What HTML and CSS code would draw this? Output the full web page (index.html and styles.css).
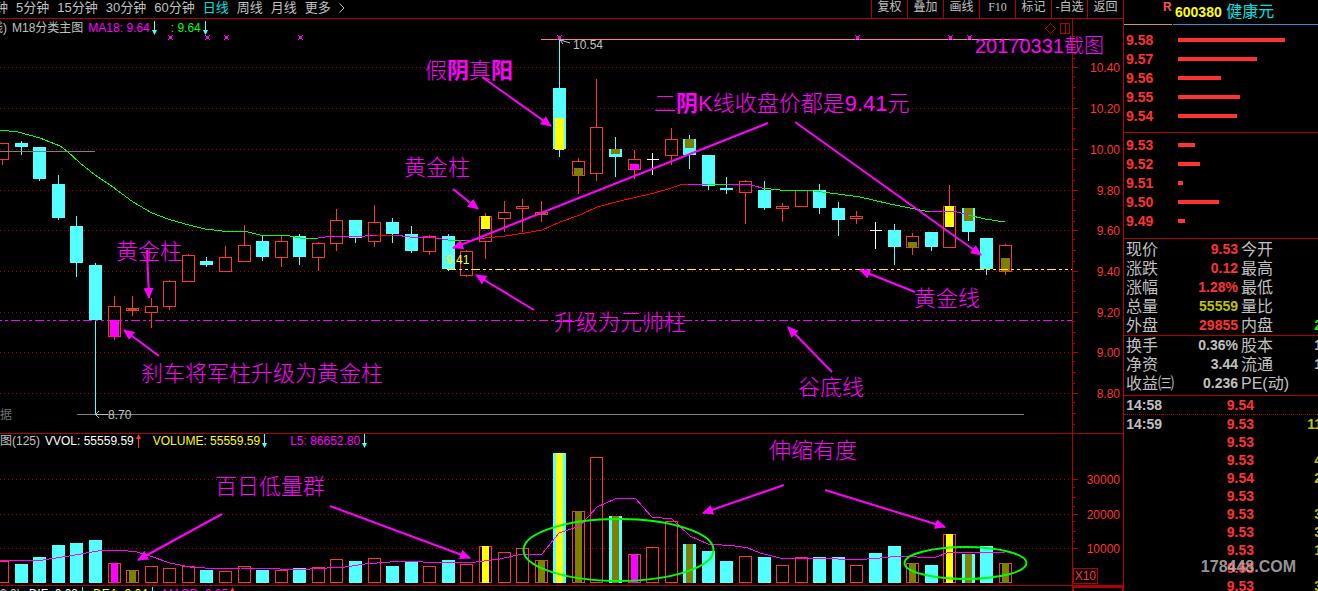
FILE: index.html
```html
<!DOCTYPE html>
<html lang="zh-CN">
<head>
<meta charset="utf-8">
<title>600380 健康元</title>
<link rel="stylesheet" href="styles.css">
</head>
<body>
<div class="app">
  <main class="main">
    <nav class="toolbar">
      <div class="periods">
        <button class="period first">钟</button>
        <button class="period">5分钟</button>
        <button class="period">15分钟</button>
        <button class="period">30分钟</button>
        <button class="period">60分钟</button>
        <button class="period active">日线</button>
        <button class="period">周线</button>
        <button class="period">月线</button>
        <button class="period">更多</button>
        <svg class="more" viewBox="0 0 6 10"><path d="M.5 .5 5 5 .5 9.500"/></svg>
      </div>
      <div class="tools">
        <button class="tool">复权</button>
        <button class="tool">叠加</button>
        <button class="tool">画线</button>
        <button class="tool f10">F10</button>
        <button class="tool">标记</button>
        <button class="tool">-自选</button>
        <button class="tool">返回</button>
      </div>
    </nav>

    <section class="panel">
      <svg class="chart" viewBox="0 19 1123 414">
        <defs>
          <marker id="head" markerUnits="userSpaceOnUse" markerWidth="12" markerHeight="10" refX="10" refY="5" orient="auto"><path d="M0 0 11 5 0 10z" fill="#f0f"/></marker>
        </defs>
        <path class="grid" d="M0 67.500H1072M0 108.500H1072M0 149.500H1072M0 190.500H1072M0 230.500H1072M0 271.500H1072M0 312.500H1072M0 352.500H1072M0 393.500H1072"/>
        <g id="priceAxis" class="axis"><path d="M1072.500 19V433"/></g>
        <g class="axis-text">
          <text x="1120" y="72">10.40</text><text x="1120" y="113">10.20</text><text x="1120" y="154">10.00</text>
          <text x="1120" y="195">9.80</text><text x="1120" y="235">9.60</text><text x="1120" y="276">9.40</text>
          <text x="1120" y="317">9.20</text><text x="1120" y="357">9.00</text><text x="1120" y="398">8.80</text>
        </g>
        <path class="axis" d="M1045.500 28.500l5-5 5 5-5 5zM1060.500 23.500h9v10h-9zM1065.500 23.500v10"/>
        <g id="candles"></g>
        <path class="level" d="M0 151.500H95M77 414.500H1024"/>
        <path class="high" d="M541 39.500H1024"/>
        <path class="dash magenta" stroke-dashoffset="13" d="M0 320.500H1072"/>
        <path class="dash yellow" d="M447 269.500H1072"/>
        <g class="ma">
          <path stroke="#0f0" d="M0 130 18 132 40 138 60 146 67 151 80 163 95 175 113 187 133 202 152 213 168 219 185 224 205 229 222 231 248 232 260 235 285 235 300 238 318 238M448 240 465 241M708 184H727M762 188 780 190 806 190 830 193 860 197 890 204 920 210 930 212M968 215 985 219 1005 222"/>
          <path stroke="#f0f" d="M318 238 333 236 365 236 376 235M395 235 410 237 430 237 448 240M465 241 485 238M688 184H708M727 184H748L762 188M930 212 943 211 957 212 968 215"/>
          <path stroke="#f00" d="M376 235H395M485 238 505 236 525 233 542 230 560 222 580 215 597 207 620 201 650 194 665 190 680 185 688 184"/>
        </g>
        <g id="crosses" class="cross"></g>
        <path class="pointer" d="M108 414.500H95.500L99 411M95.500 414.500 99 418M570 43 560 40 563 44M560 40H564"/>
        <text class="mark" x="108" y="419">8.70</text>
        <text class="mark" x="573" y="49">10.54</text>
        <text class="mark dim" x="0" y="419">据</text>
        <text class="mark tag" x="446" y="264">9.41</text>
        <g class="arrow">
          <path d="M147 250 149 298"/><path d="M159 356 124 330"/><path d="M482 77 551 126"/>
          <path d="M453 189 478 209"/><path d="M768 123 453 248"/><path d="M795 122 981 255"/>
          <path d="M534 310 476 275"/><path d="M915 292 860 270"/><path d="M832 372 788 327"/>
        </g>
        <g class="note">
          <text x="116" y="259">黄金柱</text>
          <text x="141" y="381">刹车将军柱升级为黄金柱</text>
          <text x="425" y="78">假<tspan class="b">阴</tspan>真<tspan class="b">阳</tspan></text>
          <text x="404" y="175">黄金柱</text>
          <text x="654" y="111">二<tspan class="b">阴</tspan>K线收盘价都是9.41元</text>
          <text x="554" y="330">升级为元帅柱</text>
          <text x="914" y="306">黄金线</text>
          <text x="798" y="395">谷底线</text>
          <text class="date" x="975" y="53">20170331截图</text>
        </g>
      </svg>
      <header class="legend">
        <span class="gray lead">线)</span><span class="gray g5">M18分类主图</span>
        <span class="magenta-t g5">MA18: 9.64</span><svg class="down" viewBox="0 0 5 14"><path d="M2.500 0V11"/><path class="tip" d="M0 9h5L2.500 14z"/></svg>
        <span class="green-t g14">: 9.64</span><svg class="down" viewBox="0 0 5 14"><path d="M2.500 0V11"/><path class="tip" d="M0 9h5L2.500 14z"/></svg>
      </header>
    </section>

    <section class="panel">
      <svg class="chart" viewBox="0 433 1123 152">
        <path class="grid" d="M0 479.500H1072M0 514.500H1072M0 548.500H1072"/>
        <path class="axis" d="M0 433.500H1123M1072.500 433V585M1073 479.500h5M1073 514.500h5M1073 548.500h5M1073 487.500h2M1073 497.500h3M1073 506.500h2M1073 521.500h2M1073 531.500h3M1073 541.500h2M1073.500 568.500h24v15h-24z"/>
        <g class="axis-text">
          <text x="1120" y="484">30000</text><text x="1120" y="519">20000</text><text x="1120" y="553">10000</text>
          <text x="1096" y="580">X10</text>
        </g>
        <g id="volumes"></g>
        <path class="ma" stroke="#f0f" d="M0 560 43 560 75 555 98 551 118 550 137 552 150 556 170 563 190 567 205 568 240 568 280 569 310 569 345 567 365 564 390 562 410 561 435 563 450 562 468 563 500 559 522 554 542 554 559 533 580 526 597 507 615 499 635 498 652 517 672 519 690 536 708 544 735 546 748 548 760 553 780 558 800 559 820 558 855 560 880 558 900 556 933 558 950 552 995 552 1005 553"/>
        <g class="ring"><ellipse cx="618.500" cy="550" rx="95" ry="31"/><ellipse cx="965.500" cy="563" rx="61" ry="16"/></g>
        <g class="arrow">
          <path d="M222 514 138 560"/><path d="M330 506 470 558"/><path d="M784 485 703 513"/><path d="M825 490 945 527"/>
        </g>
        <g class="note">
          <text x="215" y="494">百日低量群</text>
          <text x="769" y="458">伸缩有度</text>
        </g>
      </svg>
      <header class="legend vol">
        <span class="gray">图(125)</span>
        <span class="white-t g5">VVOL: 55559.59</span><svg class="up" viewBox="0 0 5 14"><path d="M2.500 3V14"/><path class="tip" d="M0 5h5L2.500 0z"/></svg>
        <span class="yellow-t g12">VOLUME: 55559.59</span><svg class="down" viewBox="0 0 5 14"><path d="M2.500 0V11"/><path class="tip" d="M0 9h5L2.500 14z"/></svg>
        <span class="magenta-t g23">L5: 86652.80</span><svg class="down" viewBox="0 0 5 14"><path d="M2.500 0V11"/><path class="tip" d="M0 9h5L2.500 14z"/></svg>
      </header>
    </section>

    <section class="macd">
      <header class="legend vol">
        <span class="gray">9,9)</span>
        <span class="white-t g8">DIF: 0.08</span><svg class="down" viewBox="0 0 5 14"><path d="M2.500 0V11"/></svg>
        <span class="yellow-t g8">DEA: 0.04</span><svg class="down" viewBox="0 0 5 14"><path d="M2.500 0V11"/></svg>
        <span class="magenta-t g8">MACD: 0.05</span><svg class="up" viewBox="0 0 5 14"><path d="M2.500 3V14"/><path class="tip" d="M0 5h5L2.500 0z"/></svg>
      </header>
      <div class="macd-axis"></div>
    </section>
  </main>

  <aside class="side">
    <header class="stock"><span class="flag">R</span><span class="name"><b>600380</b> 健康元</span></header>
    <div class="book sell">
      <div class="quote"><b>9.58</b><i style="width:107px"></i></div>
      <div class="quote"><b>9.57</b><i style="width:79px"></i></div>
      <div class="quote"><b>9.56</b><i style="width:43px"></i></div>
      <div class="quote"><b>9.55</b><i style="width:62px"></i></div>
      <div class="quote"><b>9.54</b><i style="width:59px"></i></div>
    </div>
    <div class="book buy">
      <div class="quote"><b>9.53</b><i style="width:17px"></i></div>
      <div class="quote"><b>9.52</b><i style="width:22px"></i></div>
      <div class="quote"><b>9.51</b><i style="width:5px"></i></div>
      <div class="quote"><b>9.50</b><i style="width:41px"></i></div>
      <div class="quote"><b>9.49</b><i style="width:7px"></i></div>
    </div>
    <div class="block price">
      <table class="info">
        <tr><th>现价</th><td class="red-t">9.53</td><th>今开</th><td></td></tr>
        <tr><th>涨跌</th><td class="red-t">0.12</td><th>最高</th><td></td></tr>
        <tr><th>涨幅</th><td class="red-t">1.28%</td><th>最低</th><td></td></tr>
        <tr><th>总量</th><td class="olive-t">55559</td><th>量比</th><td></td></tr>
        <tr><th>外盘</th><td class="red-t">29855</td><th>内盘</th><td class="green-t">2</td></tr>
      </table>
    </div>
    <div class="block finance">
      <table class="info">
        <tr><th>换手</th><td>0.36%</td><th>股本</th><td>1</td></tr>
        <tr><th>净资</th><td>3.44</th><th>流通</th><td>1</td></tr>
        <tr><th>收益㈢</th><td>0.236</td><th>PE(动)</th><td></td></tr>
      </table>
    </div>
    <table class="ticks">
      <tr class="split"><th>14:58</th><td>9.54</td><td></td></tr>
      <tr><th>14:59</th><td>9.53</td><td>11</td></tr>
      <tr><th></th><td>9.53</td><td></td></tr>
      <tr><th></th><td>9.53</td><td>4</td></tr>
      <tr><th></th><td>9.54</td><td>2</td></tr>
      <tr><th></th><td>9.53</td><td></td></tr>
      <tr><th></th><td>9.53</td><td>3</td></tr>
      <tr><th></th><td>9.53</td><td>3</td></tr>
      <tr><th></th><td>9.53</td><td>1</td></tr>
      <tr><th></th><td>9.53</td><td></td></tr>
      <tr><th></th><td>9.53</td><td>3</td></tr>
    </table>
    <div class="watermark">178448.COM</div>
  </aside>
</div>
<script src="chart.js"></script>
</body>
</html>
```
FILE: styles.css
```css
* { box-sizing: border-box; }
html, body { height: 100%; }
body {
  margin: 0;
  background: #000;
  color: #c0c0c0;
  font: 12px/14px "Liberation Sans", "Noto Sans CJK SC", sans-serif;
  overflow: hidden;
}
.app {
  display: grid;
  grid-template-columns: minmax(0, 1fr) 195px;
  height: 100vh;
  overflow: hidden;
}
.main { min-width: 0; overflow: hidden; }

/* toolbar */
.toolbar {
  display: flex;
  justify-content: space-between;
  height: 19px;
  border-bottom: 1px solid #b00000;
  overflow: hidden;
}
.periods { display: flex; gap: 8px; align-items: flex-start; }
.period, .tool {
  border: 0;
  padding: 0;
  background: none;
  color: #c0c0c0;
  font: 13px/15px "Liberation Sans", "Noto Sans CJK SC", sans-serif;
  white-space: nowrap;
}
.first { margin-left: -5px; }
.active { color: #00e0e0; }
.more { width: 6px; height: 10px; margin-top: 3px; fill: none; stroke: #c0c0c0; }
.tools { display: flex; }
.tool { width: 36px; border-left: 1px solid #b00000; padding-bottom: 3px; font-size: 12px; }
.f10 { font-family: "Liberation Serif", serif; }

/* chart panels */
.panel { display: grid; }
.panel > * { grid-area: 1 / 1; }
.chart { display: block; width: 100%; height: auto; }
.grid { stroke: #b00000; stroke-dasharray: 1 3; shape-rendering: crispEdges; }
.axis { fill: none; stroke: #b00000; shape-rendering: crispEdges; }
.axis-text { fill: #ff3232; font-size: 12px; text-anchor: end; }
.level { stroke: #808080; shape-rendering: crispEdges; }
.high { stroke: #ff8080; shape-rendering: crispEdges; }
.dash { stroke-dasharray: 9 3 3 3 3 3; shape-rendering: crispEdges; }
.magenta { stroke: #f0f; }
.yellow { stroke: #ff0; }
.ma { fill: none; shape-rendering: crispEdges; }
.cross { fill: #f0f; shape-rendering: crispEdges; }
.pointer { fill: none; stroke: #c0c0c0; }
.mark { fill: #c0c0c0; font-size: 12px; }
.dim { fill: #707070; }
.tag { fill: #ff0; }
.arrow path { stroke: #f0f; stroke-width: 2; marker-end: url(#head); }
.ring { fill: none; stroke: #0f0; stroke-width: 2; }
.note { fill: #f0f; font-size: 22px; font-weight: 300; }
.note .date { font-size: 20px; }
.b { font-weight: 700; }
.red { fill: none; stroke: #ff3232; shape-rendering: crispEdges; }
.cyan { fill: #54ffff; stroke: none; shape-rendering: crispEdges; }
.wick-cyan { stroke: #54ffff; shape-rendering: crispEdges; }
.doji { stroke: #fff; shape-rendering: crispEdges; }

/* legends */
.legend {
  display: flex;
  align-self: start;
  justify-self: start;
  align-items: center;
  padding-top: 2px;
  white-space: nowrap;
}
.legend.vol { padding-top: 1px; }
.legend svg { width: 5px; height: 14px; margin-left: 2px; }
.lead { margin-left: -9px; }
.g5 { margin-left: 5px; }
.g8 { margin-left: 8px; }
.g12 { margin-left: 12px; }
.g14 { margin-left: 14px; }
.g23 { margin-left: 23px; }
.down { stroke: #54ffff; fill: #54ffff; }
.up { stroke: #ff3232; fill: #ff3232; }
.tip { stroke: none; }
.gray { color: #c0c0c0; }
.white-t { color: #fff; }
.yellow-t { color: #ff0; }
.magenta-t { color: #f0f; }
.green-t, .info .green-t { color: #0f0; }
.red-t, .info .red-t { color: #ff3232; }
.info .olive-t { color: #c0c000; }

.macd {
  display: flex;
  justify-content: space-between;
  border-top: 1px solid #b00000;
}
.macd-axis { width: 51px; border: 2px solid #b00000; border-right-width: 1px; }

/* quote panel */
.side {
  display: flex;
  flex-direction: column;
  position: relative;
  border-left: 1px solid #b00000;
  overflow: hidden;
}
.stock {
  display: grid;
  grid-template-columns: 48px 1fr;
  column-gap: 1px;
  flex: none;
  height: 24px;
}
.flag {
  padding-left: 39px;
  border-bottom: 1px solid #d0a030;
  color: #ff5050;
  font-size: 12px;
  font-weight: 700;
}
.name {
  padding-left: 2px;
  border-bottom: 1px solid #3c8cd0;
  color: #00e0e0;
  font-size: 16px;
  line-height: 23px;
  white-space: nowrap;
}
.name b { color: #ff0; font-size: 14px; }
.book { flex: none; border-bottom: 1px solid #b00000; }
.sell { padding: 6px 0 7px; }
.buy { padding: 2px 0 8px; }
.quote {
  display: grid;
  grid-template-columns: 52px 1fr;
  align-items: center;
  height: 19px;
  padding-left: 2px;
}
.quote b { color: #ff3232; font-size: 14px; }
.quote i { height: 4px; background: #ff3232; }
.block { flex: none; border-bottom: 1px solid #b00000; }
.price { padding-top: 1px; }
.finance { padding-bottom: 2px; }
table { flex: none; width: 198px; table-layout: fixed; border-collapse: separate; border-spacing: 0; }
th, td { padding: 0; white-space: nowrap; }
.info tr { height: 19px; }
.info th {
  width: 50px;
  padding-left: 2px;
  font-size: 16px;
  font-weight: 400;
  line-height: 19px;
  text-align: left;
}
.info td { width: 64px; font-size: 14px; font-weight: 700; line-height: 19px; text-align: right; }
.info th + td + th { padding-left: 3px; }
.info td:last-child { width: 34px; }
.ticks th, .ticks td { height: 18px; font-size: 14px; font-weight: 700; line-height: 17px; text-align: right; }
.ticks th { width: 38px; }
.ticks td { color: #ff3232; width: 92px; }
.ticks td:last-child { width: 68px; color: #c0c000; }
.ticks .split > * { height: 19px; border-bottom: 1px dotted #b00000; }
.watermark {
  position: absolute;
  right: 22px;
  bottom: 12px;
  color: rgba(190, 190, 190, .8);
  font: 700 16px/24px "Liberation Sans Narrow", "Liberation Sans", sans-serif;
}
```
FILE: chart.js
```js
const NS = 'http://www.w3.org/2000/svg';
const FILL = { m: '#f0f', y: '#ff0', o: '#808000' };

// kind, high, body top, body bottom, low, volume top, marker colour, marker top, marker bottom
const days = [
  ['r',143,143,160,165,561],['c',141,143,147,155,564],['c',147,147,179,181,557],['c',175,184,218,220,545],
  ['c',216,226,263,277,543],['c',263,265,320,414,540],['r',296,306,337,340,563,'m',320,337],['r',296,308,311,316,570,'o',309,310],
  ['r',298,306,313,328,566],['r',280,281,307,310,568],['r',254,255,282,282,566],['c',257,261,265,267,570],
  ['r',246,257,272,272,571],['r',225,245,262,262,566],['c',236,241,257,261,570],['r',235,241,258,267,570],
  ['c',234,236,257,265,568],['r',242,243,258,271,567],['r',209,220,244,251,559],['c',220,220,238,243,561],
  ['r',205,222,242,247,558],['c',218,222,234,243,566],['c',226,234,251,253,562],['r',235,236,252,255,566],
  ['c',234,236,269,271,560],['r',250,251,276,277,564],['r',213,216,242,259,546,'y',216,229],['r',201,212,219,232,552],
  ['r',199,206,209,232,548],['r',201,212,215,222,560,'o',213,215],['c',38,88,149,157,453,'y',118,150],['r',158,161,176,194,511,'o',168,176],
  ['r',79,127,174,181,457],['c',137,149,157,177,516,'o',149,154],['r',150,159,170,179,554,'m',164,170],['w',153,159,159,175,547],
  ['r',128,139,156,165,521],['c',135,139,155,169,544,'o',139,148],['c',155,155,186,190,551],['c',177,188,190,194,561],
  ['r',180,181,193,224,556],['c',181,190,208,210,557],['r',203,206,209,222,565],['r',190,190,207,207,557],
  ['c',184,190,208,214,557],['c',202,208,220,236,557],['r',211,216,219,224,565],['w',222,230,230,249,553],
  ['c',224,230,247,265,546],['r',233,236,248,255,563,'o',242,248],['c',232,232,247,251,565],['r',185,206,248,248,534,'y',206,227],
  ['c',208,208,232,241,554,'o',208,221],['c',238,238,269,275,546],['r',244,245,272,275,563,'o',258,271]
];

function add(parent, tag, attrs) {
  const el = document.createElementNS(NS, tag);
  for (const k in attrs) el.setAttribute(k, attrs[k]);
  parent.appendChild(el);
}
function box(parent, kind, x, top, bottom) {
  if (kind === 'r') add(parent, 'rect', { class: 'red', x: x - 6, y: top + .5, width: 12, height: Math.max(bottom - top - 1, 1) });
  else add(parent, 'rect', { class: 'cyan', x: x - 6.5, y: top, width: 13, height: bottom - top });
}

const candles = document.getElementById('candles');
const volumes = document.getElementById('volumes');
days.forEach(([kind, high, top, bottom, low, vol, mark, mTop, mBottom], i) => {
  const x = Math.floor(2.7 + 18.57 * i) + .5;
  if (kind === 'w') {
    add(candles, 'path', { class: 'doji', d: `M${x} ${high}V${low}M${x - 6} ${top + .5}H${x + 6}` });
  } else {
    add(candles, 'path', { class: kind === 'r' ? 'red' : 'wick-cyan', d: `M${x} ${high}V${top}M${x} ${bottom}V${low}` });
    box(candles, kind, x, top, bottom);
  }
  const volKind = kind === 'w' ? (i === 35 ? 'r' : 'c') : kind;
  box(volumes, volKind, x, vol, 583);
  if (mark) {
    add(candles, 'rect', { fill: FILL[mark], x: x - 4.5, y: mTop, width: 9, height: mBottom - mTop });
    add(volumes, 'rect', { fill: FILL[mark], x: x - 3.5, y: vol, width: 7, height: 583 - vol });
  }
});

const crosses = document.getElementById('crosses');
[170, 207, 226, 300, 559, 857, 950, 969].forEach(x => {
  let d = `M${x - 1} 36h3v3h-3z`;
  [[-2, 35], [2, 35], [-2, 39], [2, 39]].forEach(([dx, y]) => { d += `M${x + dx} ${y}h1v1h-1z`; });
  add(crosses, 'path', { d });
});

const axis = document.getElementById('priceAxis');
const levels = [27, 67, 108, 149, 190, 230, 271, 312, 352, 393];
levels.forEach((y, i) => {
  let d = i ? `M1073 ${y + .5}h5` : '';
  d += `M1073 ${y + 9.5}h2M1073 ${y + 20.5}h3M1073 ${y + 31.5}h2`;
  add(axis, 'path', { d });
});
```
